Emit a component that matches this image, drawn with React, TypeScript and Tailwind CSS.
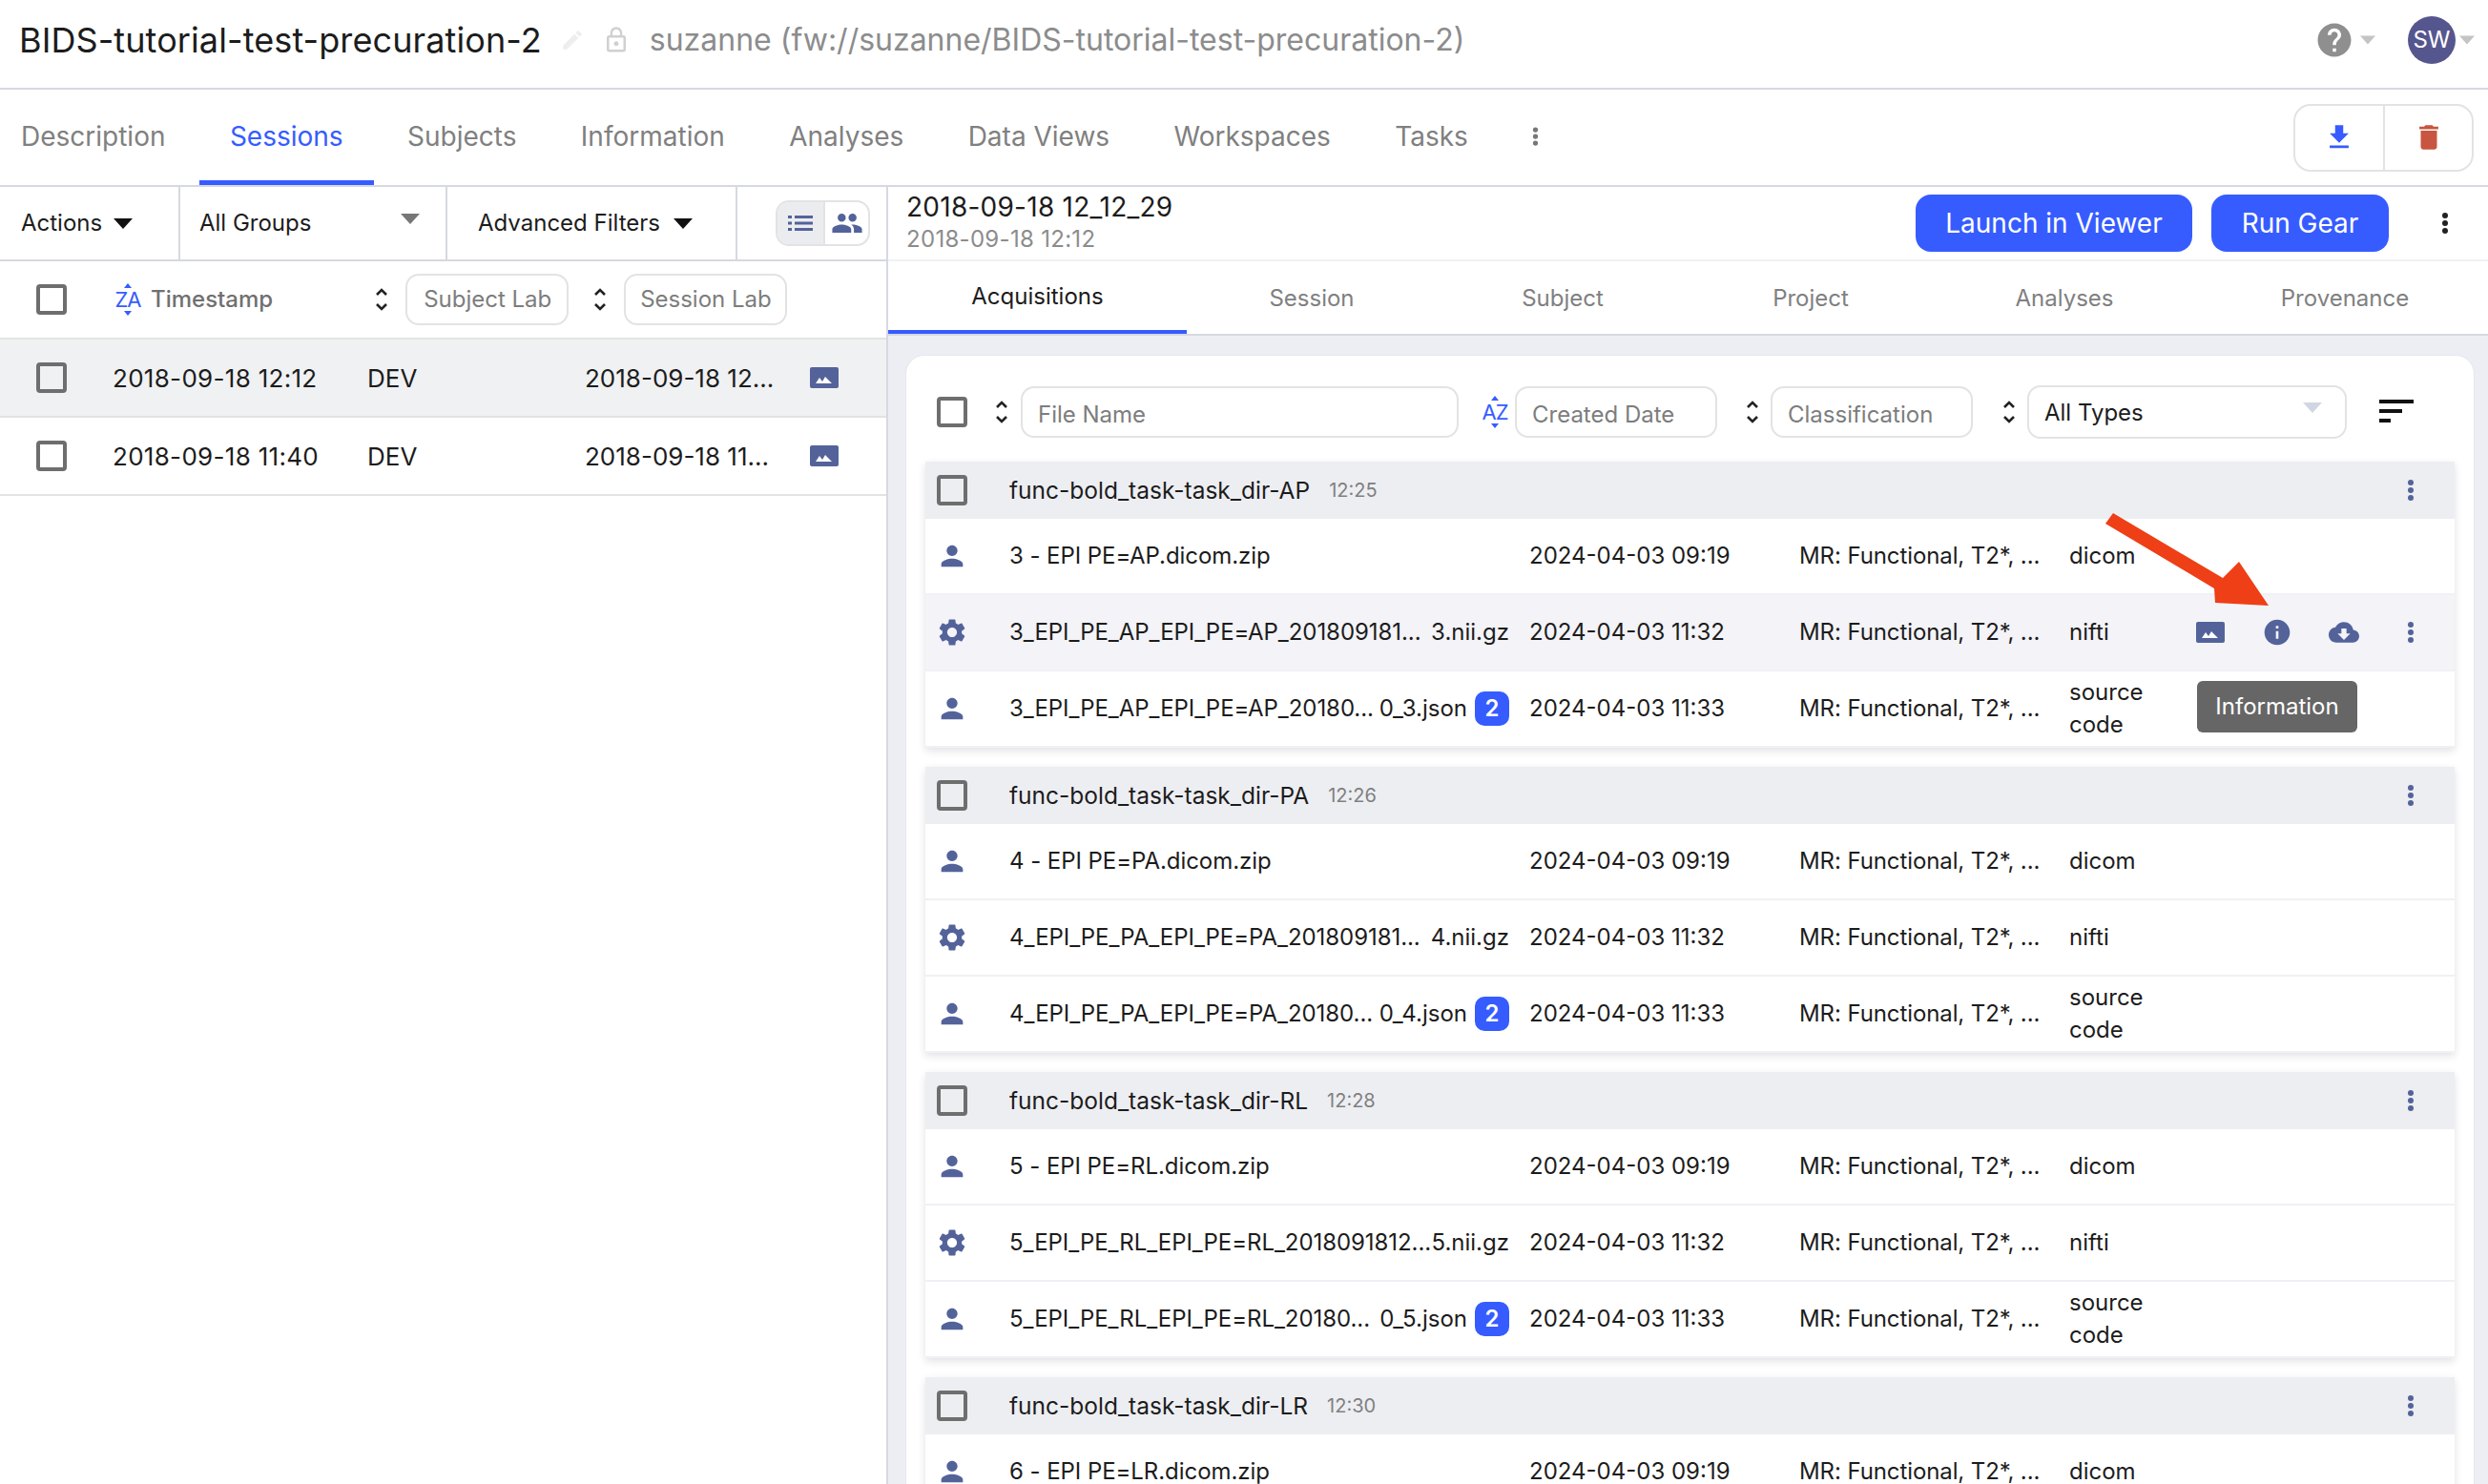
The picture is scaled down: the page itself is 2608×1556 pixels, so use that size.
import React from "react";

const P = {
  person: "M12 12c2.21 0 4-1.79 4-4s-1.79-4-4-4-4 1.79-4 4 1.79 4 4 4zm0 2c-2.67 0-8 1.34-8 4v2h16v-2c0-2.66-5.33-4-8-4z",
  gear: "M19.14 12.94c.04-.3.06-.61.06-.94 0-.32-.02-.64-.07-.94l2.03-1.58c.18-.14.23-.41.12-.61l-1.92-3.32c-.12-.22-.37-.29-.59-.22l-2.39.96c-.5-.38-1.03-.7-1.62-.94l-.36-2.54c-.04-.24-.24-.41-.48-.41h-3.84c-.24 0-.43.17-.47.41l-.36 2.54c-.59.24-1.13.57-1.62.94l-2.39-.96c-.22-.08-.47 0-.59.22L2.74 8.87c-.12.21-.08.47.12.61l2.03 1.58c-.05.3-.09.63-.09.94s.02.64.07.94l-2.03 1.58c-.18.14-.23.41-.12.61l1.92 3.32c.12.22.37.29.59.22l2.39-.96c.5.38 1.03.7 1.62.94l.36 2.54c.05.24.24.41.48.41h3.84c.24 0 .44-.17.47-.41l.36-2.54c.59-.24 1.13-.56 1.62-.94l2.39.96c.22.08.47 0 .59-.22l1.92-3.32c.12-.22.07-.47-.12-.61l-2.01-1.58zM12 15.6c-1.98 0-3.6-1.62-3.6-3.6s1.62-3.6 3.6-3.6 3.6 1.62 3.6 3.6-1.62 3.6-3.6 3.6z",
  info: "M12 2C6.48 2 2 6.48 2 12s4.48 10 10 10 10-4.48 10-10S17.52 2 12 2zm1 15h-2v-6h2v6zm0-8h-2V7h2v2z",
  cloud: "M19.35 10.04C18.67 6.59 15.64 4 12 4 9.11 4 6.6 5.64 5.35 8.04 2.34 8.36 0 10.91 0 14c0 3.31 2.69 6 6 6h13c2.76 0 5-2.24 5-5 0-2.64-2.05-4.78-4.65-4.96zM17 13l-5 5-5-5h3V9h4v4h3z",
  help: "M12 2C6.48 2 2 6.48 2 12s4.48 10 10 10 10-4.48 10-10S17.52 2 12 2zm1 17h-2v-2h2v2zm2.07-7.75l-.9.92C13.45 12.9 13 13.5 13 15h-2v-.5c0-1.1.45-2.1 1.17-2.83l1.24-1.26c.37-.36.59-.86.59-1.41 0-1.1-.9-2-2-2s-2 .9-2 2H8c0-2.21 1.79-4 4-4s4 1.79 4 4c0 .88-.36 1.68-.93 2.25z",
  download: "M19 9h-4V3H9v6H5l7 7 7-7zM5 18v2h14v-2H5z",
  trash: "M6 19c0 1.1.9 2 2 2h8c1.1 0 2-.9 2-2V7H6v12zM19 4h-3.5l-1-1h-5l-1 1H5v2h14V4z",
  people: "M16 11c1.66 0 2.99-1.34 2.99-3S17.66 5 16 5c-1.66 0-3 1.34-3 3s1.34 3 3 3zm-8 0c1.66 0 2.99-1.34 2.99-3S9.66 5 8 5C6.34 5 5 6.34 5 8s1.34 3 3 3zm0 2c-2.33 0-7 1.17-7 3.5V19h14v-2.5c0-2.33-4.67-3.5-7-3.5zm8 0c-.29 0-.62.02-.97.05 1.16.84 1.97 1.97 1.97 3.45V19h6v-2.5c0-2.33-4.67-3.5-7-3.5z",
  lock: "M12 17c1.1 0 2-.9 2-2s-.9-2-2-2-2 .9-2 2 .9 2 2 2zm6-9h-1V6c0-2.76-2.24-5-5-5S7 3.24 7 6v2H6c-1.1 0-2 .9-2 2v10c0 1.1.9 2 2 2h12c1.1 0 2-.9 2-2V10c0-1.1-.9-2-2-2zM8.9 6c0-1.71 1.39-3.1 3.1-3.1s3.1 1.39 3.1 3.1v2H8.9V6zM18 20H6V10h12v10z",
  pencil: "M3 17.25V21h3.75L17.81 9.94l-3.75-3.75L3 17.25zM20.71 7.04c.39-.39.39-1.02 0-1.41l-2.34-2.34c-.39-.39-1.02-.39-1.41 0l-1.83 1.83 3.75 3.75 1.83-1.83z",
};

function Icon({ d, className }: { d: string; className: string }) {
  return (
    <svg viewBox="0 0 24 24" fill="currentColor" className={className}>
      <path d={d} />
    </svg>
  );
}

function Kebab({ className }: { className: string }) {
  return (
    <svg viewBox="0 0 8 24" fill="currentColor" className={className}>
      <circle cx="4" cy="4" r="3" />
      <circle cx="4" cy="12" r="3" />
      <circle cx="4" cy="20" r="3" />
    </svg>
  );
}

function Check() {
  return <div className="w-[32px] h-[32px] shrink-0 rounded-[4px] border-[4px] border-[#6e6e6e]" />;
}

function Sort() {
  return (
    <svg viewBox="0 0 14 26" fill="none" stroke="#222" strokeWidth="2.6" className="w-[14px] h-[26px] shrink-0">
      <path d="M2 8l5-5 5 5M2 18l5 5 5-5" />
    </svg>
  );
}

function Caret({ className }: { className: string }) {
  return (
    <svg viewBox="0 0 20 11" fill="currentColor" className={className}>
      <path d="M0 0h20L10 11z" />
    </svg>
  );
}

function ImageIcon({ className }: { className: string }) {
  return (
    <svg viewBox="0 0 30 22" className={className}>
      <rect width="30" height="22" rx="2" fill="#53639a" />
      <path d="M6 17l4-6 3 4 3-5 7 7z" fill="#fff" />
    </svg>
  );
}

function SortLetters({ top, bottom }: { top: string; bottom: string }) {
  return (
    <span className="relative inline-flex w-[28px] h-[34px] items-center justify-center text-[#365cff] text-[22px] leading-none shrink-0 tracking-[-1px]">
      {top}
      {bottom}
      <svg viewBox="0 0 8 5" fill="#365cff" className="absolute top-0 left-[10px] w-[8px] h-[5px]">
        <path d="M4 0l4 5H0z" />
      </svg>
      <svg viewBox="0 0 8 5" fill="#365cff" className="absolute bottom-0 left-[10px] w-[8px] h-[5px]">
        <path d="M0 0h8L4 5z" />
      </svg>
    </span>
  );
}

function FilterBox({ label, className }: { label: string; className: string }) {
  return (
    <div className={`h-[54px] shrink-0 flex items-center rounded-[14px] border-2 border-[#e3e3e3] bg-white text-[24px] text-[#7d7d7d] ${className}`}>
      {label}
    </div>
  );
}

type Row = { icon: "person" | "gear"; name: string; suffix: string; badge?: boolean; date: string; type: string[]; hover?: boolean };

function FileRow({ r }: { r: Row }) {
  return (
    <div className={`h-[80px] flex items-center text-[24px] text-[#1c1c1c] border-b-2 border-[#f0f1f5] ${r.hover ? "bg-[#f3f3f8]" : "bg-white"}`}>
      <div className="w-[56px] mr-[32px] shrink-0 flex justify-center">
        {r.icon === "person" ? <Icon d={P.person} className="w-[34px] h-[34px] text-[#53639a]" /> : <Icon d={P.gear} className="w-[34px] h-[34px] text-[#53639a]" />}
      </div>
      <div className="w-[524px] shrink-0 flex items-center justify-between whitespace-nowrap">
        <span className="tracking-[-0.06px]">{r.name}</span>
        <span className="flex items-center gap-[8px]">
          {r.suffix}
          {r.badge ? (
            <span className="w-[36px] h-[36px] rounded-[10px] bg-[#365cff] text-white font-semibold flex items-center justify-center">2</span>
          ) : null}
        </span>
      </div>
      <div className="w-[304px] shrink-0 pl-[21px] whitespace-nowrap">{r.date}</div>
      <div className="w-[283px] shrink-0 whitespace-nowrap tracking-[-0.1px]">MR: Functional, T2*, ...</div>
      <div className="w-[113px] shrink-0 leading-[34px]">
        {r.type.map((t) => (
          <div key={t}>{t}</div>
        ))}
      </div>
      {r.hover ? (
        <div className="flex items-center">
          <div className="w-[70px] flex justify-center"><ImageIcon className="w-[30px] h-[22px]" /></div>
          <div className="w-[70px] flex justify-center"><Icon d={P.info} className="w-[32px] h-[32px] text-[#53639a]" /></div>
          <div className="w-[70px] flex justify-center"><Icon d={P.cloud} className="w-[32px] h-[32px] text-[#53639a]" /></div>
          <div className="w-[70px] flex justify-center"><Kebab className="w-[8px] h-[24px] text-[#53639a]" /></div>
        </div>
      ) : null}
    </div>
  );
}

function Group({ title, time, rows }: { title: string; time: string; rows: Row[] }) {
  return (
    <div className="mb-[20px] shadow-[0_3px_8px_rgba(40,45,70,0.14)]">
      <div className="h-[60px] bg-[#edeef2] flex items-center pl-[12px]">
        <Check />
        <span className="ml-[44px] text-[24.5px] text-[#1c1c1c]">{title}</span>
        <span className="ml-[20px] text-[20px] text-[#808080]">{time}</span>
        <span className="ml-auto w-[92px] flex justify-center"><Kebab className="w-[8px] h-[24px] text-[#53639a]" /></span>
      </div>
      {rows.map((r, i) => (
        <FileRow key={i} r={r} />
      ))}
    </div>
  );
}

const mk = (n: string, d: string, long: string, short: string, hover?: boolean): Row[] => [
  { icon: "person", name: `${n} - EPI PE=${d}.dicom.zip`, suffix: "", date: "2024-04-03 09:19", type: ["dicom"] },
  { icon: "gear", name: long, suffix: `${n}.nii.gz`, date: "2024-04-03 11:32", type: ["nifti"], hover },
  { icon: "person", name: short, suffix: `0_${n}.json`, badge: true, date: "2024-04-03 11:33", type: ["source", "code"] },
];

const TabsTop = ["Description", "Sessions", "Subjects", "Information", "Analyses", "Data Views", "Workspaces", "Tasks"];

export default function App() {
  return (
    <div className="relative w-[2608px] h-[1556px] overflow-hidden bg-white font-['Inter',sans-serif] text-[#1c1c1c]">
      {/* Title bar */}
      <header className="h-[94px] flex items-center pl-[20px] pr-[14px] pb-[8px] border-b-2 border-[#d6d8e2]">
        <span className="text-[36px] tracking-[0.1px] text-[#1c1c1c] whitespace-nowrap">BIDS-tutorial-test-precuration-2</span>
        <Icon d={P.pencil} className="ml-[19px] w-[26px] h-[26px] text-[#eeeeee]" />
        <Icon d={P.lock} className="ml-[18px] w-[30px] h-[30px] text-[#d0d0d0]" />
        <span className="ml-[20px] text-[32px] text-[#8c8c8c] whitespace-nowrap">suzanne (fw://suzanne/BIDS-tutorial-test-precuration-2)</span>
        <div className="ml-auto flex items-center">
          <Icon d={P.help} className="w-[42px] h-[42px] text-[#8f8f8f]" />
          <Caret className="ml-[6px] w-[16px] h-[10px] text-[#c4c4c4]" />
          <div className="ml-[34px] w-[50px] h-[50px] rounded-full bg-[#56568f] text-white text-[24px] flex items-center justify-center">SW</div>
          <Caret className="ml-[4px] w-[16px] h-[10px] text-[#c4c4c4]" />
        </div>
      </header>

      {/* Main tabs */}
      <nav className="h-[102px] flex items-stretch border-b-2 border-[#d6d8e2] pl-[22px] pr-[15px]">
        {TabsTop.map((t, i) => (
          <div
            key={t}
            className={`flex items-center text-[28px] whitespace-nowrap border-b-[5px] pt-[3px] ${i === 0 ? "pr-[32px]" : "px-[32px] ml-[3.4px]"} ${i === 1 ? "text-[#365cff] border-[#365cff]" : "text-[#808080] border-transparent"}`}
          >
            {t}
          </div>
        ))}
        <div className="flex items-center ml-[35px] pb-[2px]"><Kebab className="w-[7px] h-[22px] text-[#777]" /></div>
        <div className="ml-auto self-center h-[71px] w-[189px] rounded-[18px] border-2 border-[#e3e3e3] flex">
          <div className="w-[94px] flex items-center justify-center border-r-2 border-[#e3e3e3]"><Icon d={P.download} className="w-[34px] h-[34px] text-[#365cff]" /></div>
          <div className="flex-1 flex items-center justify-center"><Icon d={P.trash} className="w-[34px] h-[34px] text-[#c8553f]" /></div>
        </div>
      </nav>

      <div className="flex h-[1360px]">
        {/* Left panel */}
        <aside className="w-[931px] shrink-0 border-r-2 border-[#d6d8e2]">
          <div className="h-[78px] flex items-stretch border-b-2 border-[#d6d8e2] text-[24px]">
            <div className="w-[189px] flex items-center pl-[22px] gap-[12px] border-r-2 border-[#d6d8e2]">
              Actions <Caret className="w-[20px] h-[11px] text-[#111]" />
            </div>
            <div className="w-[280px] relative flex items-center pl-[20px] border-r-2 border-[#d6d8e2]">
              All Groups
              <Caret className="absolute right-[27px] top-[28px] w-[20px] h-[11px] text-[#777]" />
            </div>
            <div className="w-[304px] flex items-center pl-[32px] gap-[14px] border-r-2 border-[#d6d8e2]">
              Advanced Filters <Caret className="w-[20px] h-[11px] text-[#111]" />
            </div>
            <div className="flex items-center pl-[40px]">
              <div className="w-[99px] h-[48px] rounded-[14px] border-2 border-[#e3e3e3] flex overflow-hidden">
                <div className="w-[50px] bg-[#ebecf0] border-r-2 border-[#e3e3e3] flex items-center justify-center">
                  <svg viewBox="0 0 26 20" fill="#53639a" className="w-[26px] h-[20px]">
                    <path d="M0 2h4v3H0zM7 2h19v3H7zM0 8.500h4v3H0zM7 8.500h19v3H7zM0 15h4v3H0zM7 15h19v3H7z" />
                  </svg>
                </div>
                <div className="flex-1 flex items-center justify-center"><Icon d={P.people} className="w-[34px] h-[34px] text-[#53639a]" /></div>
              </div>
            </div>
          </div>
          <div className="h-[82px] flex items-center border-b-2 border-[#e3e3e3] pl-[38px] text-[24px]">
            <Check />
            <span className="ml-[50px]"><SortLetters top="Z" bottom="A" /></span>
            <span className="ml-[10px] text-[#707070] font-medium">Timestamp</span>
            <span className="ml-[107px]"><Sort /></span>
            <FilterBox label="Subject Lab" className="ml-[18px] w-[171px] pl-[17px]" />
            <span className="ml-[26px]"><Sort /></span>
            <FilterBox label="Session Lab" className="ml-[18px] w-[171px] pl-[15px]" />
          </div>
          {[
            ["2018-09-18 12:12", "2018-09-18 12..."],
            ["2018-09-18 11:40", "2018-09-18 11..."],
          ].map(([a, b], i) => (
            <div key={a} className={`h-[82px] flex items-center pl-[38px] text-[26px] border-b-2 border-[#e3e3e3] ${i === 0 ? "bg-[#f0f1f3]" : "bg-white"}`}>
              <Check />
              <span className="ml-[48px] w-[267px] whitespace-nowrap tracking-[0.3px]">{a}</span>
              <span className="w-[228px]">DEV</span>
              <span className="w-[236px] whitespace-nowrap">{b}</span>
              <ImageIcon className="w-[30px] h-[22px]" />
            </div>
          ))}
        </aside>

        {/* Right panel */}
        <main className="flex-1 min-w-0 flex flex-col overflow-hidden">
          <div className="h-[78px] shrink-0 flex items-center border-b-2 border-[#f0f1f5] pl-[20px]">
            <div className="-ml-px">
              <div className="text-[28px] leading-[33px] tracking-[0.25px]">2018-09-18 12_12_29</div>
              <div className="text-[24px] leading-[33px] tracking-[0.3px] text-[#8c8c8c]">2018-09-18 12:12</div>
            </div>
            <div className="ml-auto w-[290px] h-[60px] rounded-[16px] bg-[#365cff] text-white text-[28px] flex items-center justify-center">Launch in Viewer</div>
            <div className="ml-[20px] w-[186px] h-[60px] rounded-[16px] bg-[#365cff] text-white text-[28px] flex items-center justify-center">Run Gear</div>
            <div className="ml-[55px] mr-[41px] flex justify-center"><Kebab className="w-[8px] h-[24px] text-[#222]" /></div>
          </div>
          <div className="h-[78px] shrink-0 flex items-stretch border-b-2 border-[#d6d8e2] text-[24px] text-[#808080]">
            <div className="w-[313px] pt-[2px] flex items-center justify-center border-b-[4px] text-[#1c1c1c] border-[#365cff]">Acquisitions</div>
            <div className="w-[262px] pt-[2px] flex items-center justify-center">Session</div>
            <div className="w-[264px] pt-[2px] flex items-center justify-center">Subject</div>
            <div className="w-[256px] pt-[2px] flex items-center justify-center">Project</div>
            <div className="w-[276px] pt-[2px] flex items-center justify-center">Analyses</div>
            <div className="w-[306px] pt-[2px] pl-[6px] flex items-center justify-center">Provenance</div>
          </div>
          <div className="flex-1 bg-[#eceef3] pl-[18px] pr-[14px] pt-[20px]">
            <div className="bg-white rounded-t-[20px] h-[1300px] px-[20px] border border-[#e6e7ec]">
              <div className="h-[111px] pt-[6px] flex items-center pl-[12px]">
                <Check />
                <span className="ml-[29px]"><Sort /></span>
                <FilterBox label="File Name" className="ml-[13px] w-[459px] pl-[16px] pt-[6px]" />
                <span className="ml-[24px]"><SortLetters top="A" bottom="Z" /></span>
                <FilterBox label="Created Date" className="ml-[7px] w-[212px] pl-[16px] pt-[6px]" />
                <span className="ml-[30px]"><Sort /></span>
                <FilterBox label="Classification" className="ml-[12px] w-[212px] pl-[16px] pt-[6px]" />
                <span className="ml-[31px]"><Sort /></span>
                <div className="ml-[12px] w-[335px] h-[56px] shrink-0 rounded-[14px] border-2 border-[#e3e3e3] relative flex items-center pl-[16px] pt-[2px] text-[24px]">
                  All Types
                  <Caret className="absolute right-[24px] top-[16px] w-[20px] h-[11px] text-[#d2d6e2]" />
                </div>
                <svg viewBox="0 0 36 24" fill="#111" className="ml-[34px] w-[36px] h-[24px] -mt-[2px]">
                  <path d="M0 0h36v4H0zM0 10h24v4H0zM0 20h12v4H0z" />
                </svg>
              </div>
              <Group title="func-bold_task-task_dir-AP" time="12:25" rows={mk("3", "AP", "3_EPI_PE_AP_EPI_PE=AP_201809181...", "3_EPI_PE_AP_EPI_PE=AP_20180...", true)} />
              <Group title="func-bold_task-task_dir-PA" time="12:26" rows={mk("4", "PA", "4_EPI_PE_PA_EPI_PE=PA_201809181...", "4_EPI_PE_PA_EPI_PE=PA_20180...")} />
              <Group title="func-bold_task-task_dir-RL" time="12:28" rows={mk("5", "RL", "5_EPI_PE_RL_EPI_PE=RL_2018091812...", "5_EPI_PE_RL_EPI_PE=RL_20180...")} />
              <Group title="func-bold_task-task_dir-LR" time="12:30" rows={mk("6", "LR", "", "").slice(0, 1)} />
            </div>
          </div>
        </main>
      </div>

      {/* Tooltip */}
      <div className="absolute left-[2303px] top-[714px] w-[168px] h-[54px] rounded-[6px] bg-[#666666] text-white text-[24px] flex items-center justify-center">Information</div>

      {/* Annotation arrow */}
      <svg viewBox="0 0 2608 1556" className="absolute inset-0 w-[2608px] h-[1556px] pointer-events-none">
        <path d="M2215 538L2207 549L2321 617L2322 632L2378 635L2347 589L2330 606z" fill="#ee3f16" />
      </svg>
    </div>
  );
}
